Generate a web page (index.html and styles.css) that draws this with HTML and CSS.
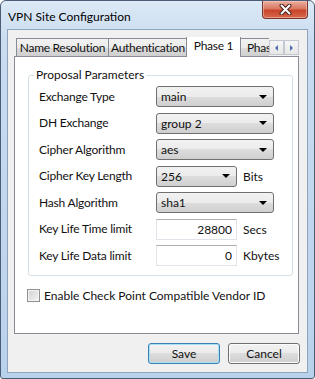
FILE: index.html
```
<!DOCTYPE html>
<html lang="en">
  <head>
    <meta charset="UTF-8" />
    <title>VPN Site Configuration</title>
    <link rel="stylesheet" href="styles.css">
  </head>
  <body>
    <!-- Ventana del diálogo -->
    <div class="window">
      <div class="titlebar">
        <div class="title">VPN Site Configuration</div>
        <div class="close">
          <svg width="13" height="11" viewBox="0 0 13 11">
            <path d="M2.5 1.5 L10.5 9.5 M10.5 1.5 L2.5 9.5" stroke="#4a2119" stroke-width="4" stroke-linecap="round" />
            <path d="M2.5 1.5 L10.5 9.5 M10.5 1.5 L2.5 9.5" stroke="#fff" stroke-width="2" stroke-linecap="round" />
          </svg>
        </div>
      </div>

      <div class="client">
        <!-- Pestañas -->
        <div class="tabbar">
          <div class="tabs">
            <div class="tab tab-name">Name Resolution</div>
            <div class="tab tab-auth">Authentication</div>
            <div class="tab tab-phase1 active">Phase 1</div>
            <div class="tab tab-phase2">Phase 2</div>
          </div>
          <div class="scroller">
            <div class="arrow"><span class="tri-left"></span></div>
            <div class="arrow"><span class="tri-right"></span></div>
          </div>
        </div>

        <div class="panel">
          <fieldset class="group">
            <legend>Proposal Parameters</legend>
            <div class="rows">
              <label>Exchange Type</label>
              <div class="combo wide"><span>main</span><i class="drop"></i></div>

              <label>DH Exchange</label>
              <div class="combo wide"><span>group 2</span><i class="drop"></i></div>

              <label>Cipher Algorithm</label>
              <div class="combo wide"><span>aes</span><i class="drop"></i></div>

              <label>Cipher Key Length</label>
              <div class="field">
                <div class="combo short"><span>256</span><i class="drop"></i></div>
                <span class="unit">Bits</span>
              </div>

              <label>Hash Algorithm</label>
              <div class="combo wide"><span>sha1</span><i class="drop"></i></div>

              <label>Key Life Time limit</label>
              <div class="field">
                <input class="num" type="text" value="28800" />
                <span class="unit">Secs</span>
              </div>

              <label>Key Life Data limit</label>
              <div class="field">
                <input class="num" type="text" value="0" />
                <span class="unit">Kbytes</span>
              </div>
            </div>
          </fieldset>

          <div class="check">
            <span class="box"></span>
            <span>Enable Check Point Compatible Vendor ID</span>
          </div>
        </div>

        <div class="buttons">
          <button class="btn default">Save</button>
          <button class="btn">Cancel</button>
        </div>
      </div>
    </div>
  </body>
</html>
```

FILE: styles.css
```
/* Base */
body {
  margin: 0;
  font-family: 'Lato', 'Liberation Sans', sans-serif;
  font-size: 12px;
  color: #111;
}

/* Marco de la ventana */
.window {
  width: 315px;
  height: 379px;
  box-sizing: border-box;
  border: 1px solid #4b5d74;
  border-radius: 6px 6px 3px 3px;
  background: linear-gradient(#dce9f6, #c9dcf0 40px, #b9d2ec);
  padding: 0 6px 5px 6px;
  display: flex;
  flex-direction: column;
}

.titlebar {
  height: 28px;
  display: flex;
  justify-content: space-between;
  align-items: flex-start;
  margin: 0 -6px;
}

.title {
  padding: 9px 0 0 7px;
  line-height: 14px;
  color: #000;
}

.close {
  width: 46px;
  height: 18px;
  margin-right: 6px;
  box-sizing: border-box;
  border: 1px solid #76352a;
  border-top: none;
  border-radius: 0 0 4px 4px;
  background: linear-gradient(#eab0a2, #da7760 45%, #c8442a 55%, #d7694d);
  box-shadow: inset 0 0 0 1px rgba(255, 210, 200, 0.5);
  display: flex;
  align-items: center;
  justify-content: center;
}

.client {
  flex: 1;
  border: 1px solid #8ea3bc;
  background: #f0f0f0;
  padding: 7px 8px 6px 6px;
  display: flex;
  flex-direction: column;
}

/* Pestañas */
.tabbar {
  height: 20px;
  display: flex;
  position: relative;
  z-index: 1;
  margin-bottom: -1px;
}

.tabs {
  flex: 1;
  display: flex;
  align-items: flex-end;
  overflow: hidden;
  padding-left: 2px;
}

.tab {
  flex: none;
  height: 18px;
  box-sizing: border-box;
  border: 1px solid #898c95;
  border-bottom: none;
  background: linear-gradient(#f2f2f2, #ebebeb 50%, #dddddd 50%, #cfcfcf);
  text-align: center;
  line-height: 17px;
  letter-spacing: -0.3px;
  white-space: nowrap;
  margin-bottom: 1px;
}

.tab-name {
  width: 93px;
}

.tab-auth {
  width: 80px;
  margin-left: -1px;
}

.tab-phase1 {
  width: 55px;
  margin-left: -2px;
}

.tab-phase2 {
  width: 52px;
  margin-left: -1px;
  text-align: left;
  padding-left: 6px;
}

.tab.active {
  height: 21px;
  margin-bottom: 0;
  background: #fff;
  line-height: 18px;
  position: relative;
}

.scroller {
  display: flex;
  margin-top: 3px;
  height: 15px;
}

.arrow {
  width: 15px;
  height: 15px;
  box-sizing: border-box;
  border: 1px solid #c4c8d0;
  background: linear-gradient(#f6f6f6, #e7e7e7);
  display: flex;
  align-items: center;
  justify-content: center;
}

.tri-left {
  border-top: 3px solid transparent;
  border-bottom: 3px solid transparent;
  border-right: 3px solid #4c6bb0;
}

.tri-right {
  border-top: 3px solid transparent;
  border-bottom: 3px solid transparent;
  border-left: 3px solid #4c6bb0;
}

.panel {
  height: 278px;
  box-sizing: border-box;
  border: 1px solid #898c95;
  background: #fff;
  padding: 11px 10px 0 13px;
}

/* Grupo de parámetros */
.group {
  margin: 0;
  border: 1px solid #d5dfe5;
  border-radius: 3px;
  padding: 0 12px 9px 10px;
}

.group legend {
  padding: 0 2px;
  margin-left: -5px;
  line-height: 14px;
}

.rows {
  display: grid;
  grid-template-columns: 117px 1fr;
  grid-auto-rows: 21px;
  row-gap: 5.5px;
  align-items: center;
  margin-top: 4px;
}

.rows label {
  line-height: 14px;
  letter-spacing: -0.2px;
}

.field {
  display: flex;
  align-items: center;
}

.combo {
  height: 21px;
  box-sizing: border-box;
  border: 1px solid #707070;
  border-radius: 3px;
  background: linear-gradient(#f2f2f2, #ebebeb 50%, #dddddd 50%, #cfcfcf);
  display: flex;
  align-items: center;
  justify-content: space-between;
  padding: 0 6px 0 4px;
}

.combo.wide {
  width: 118px;
}

.combo.short {
  width: 81px;
}

.drop {
  border-left: 4px solid transparent;
  border-right: 4px solid transparent;
  border-top: 4px solid #000;
}

.num {
  width: 81px;
  height: 21px;
  box-sizing: border-box;
  border: 1px solid #e2e3ea;
  border-top-color: #abadb3;
  font: inherit;
  color: #111;
  text-align: right;
  padding: 0 4px;
  margin: 0;
  background: #fff;
}

.unit {
  margin-left: 6px;
}

/* Casilla */
.check {
  display: flex;
  align-items: center;
  gap: 4px;
  margin-top: 12px;
  margin-left: -1px;
}

.box {
  width: 13px;
  height: 13px;
  box-sizing: border-box;
  border: 1px solid #8f8f8f;
  background: linear-gradient(135deg, #d0d0d0, #f6f6f6);
  box-shadow: inset 0 0 0 1px #f4f4f4;
}

/* Botones */
.buttons {
  display: flex;
  justify-content: flex-end;
  gap: 8px;
  margin-top: 9px;
  margin-right: -1px;
}

.btn {
  width: 72px;
  height: 21px;
  font: inherit;
  color: #111;
  border: 1px solid #707070;
  border-radius: 3px;
  background: linear-gradient(#f2f2f2, #ebebeb 50%, #dddddd 50%, #cfcfcf);
  box-shadow: inset 0 0 0 1px #fbfbfb;
  padding: 0;
}

.btn.default {
  border-color: #3c7fb1;
  box-shadow: inset 0 0 0 1px #a6e1f8;
}
```
